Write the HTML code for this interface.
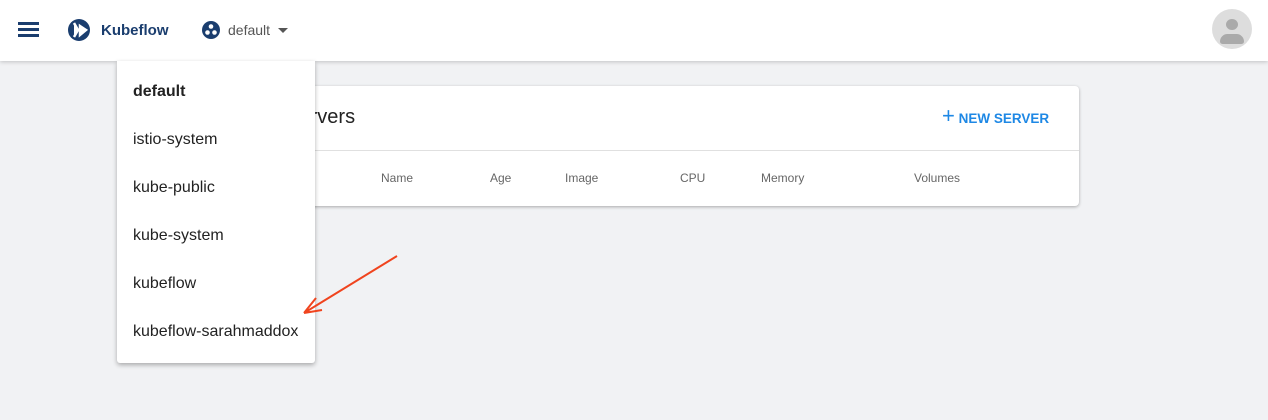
<!DOCTYPE html>
<html><head><style>
body{margin:0;width:1268px;height:420px;background:#f1f2f4;font-family:"Liberation Sans",sans-serif;position:relative;overflow:hidden}
.top{position:absolute;left:0;top:0;width:1268px;height:61px;background:#fff;box-shadow:0 1px 4px rgba(0,0,0,.2)}
.card{position:absolute;left:140px;top:86px;width:939px;height:120px;background:#fff;border-radius:4px;box-shadow:0 1px 3px rgba(0,0,0,.3)}
.th{position:absolute;top:171px;font-size:12px;color:#666}
.menu{position:absolute;left:117px;top:61px;width:198px;height:302px;background:#fff;box-shadow:0 2px 5px rgba(0,0,0,.3);border-radius:0 0 3px 3px}
.menu div{position:absolute;left:16px;font-size:16px;color:#222}
</style></head><body>
<div class="top">
<div style="position:absolute;left:18px;top:22px;width:21px;height:3px;background:#1a3d6e;box-shadow:0 6px 0 #1a3d6e,0 12px 0 #1a3d6e"></div>
<svg style="position:absolute;left:67px;top:18px" width="24" height="24" viewBox="0 0 24 24"><circle cx="12" cy="12" r="11" fill="#1a3d6e"/><path d="M7 5 L11 12 L7 19 M13 8 L19 12 L13 17 Z" stroke="#fff" stroke-width="2.5" fill="#fff"/></svg>
<div style="position:absolute;left:101px;top:22px;font-size:15px;font-weight:bold;color:#1a3d6e">Kubeflow</div>
<svg style="position:absolute;left:202px;top:21px" width="18" height="18" viewBox="0 0 18 18"><circle cx="9" cy="9" r="9" fill="#1a3d6e"/><circle cx="9" cy="5.5" r="2.3" fill="#fff"/><circle cx="5.5" cy="11.5" r="2.3" fill="#fff"/><circle cx="12.5" cy="11.5" r="2.3" fill="#fff"/></svg>
<div style="position:absolute;left:228px;top:22px;font-size:14px;color:#555">default</div>
<div style="position:absolute;left:278px;top:28px;border:5px solid transparent;border-top-color:#555;border-bottom:0"></div>
<div style="position:absolute;left:1212px;top:9px;width:40px;height:40px;border-radius:50%;background:#ddd;overflow:hidden"><div style="position:absolute;left:14px;top:10px;width:12px;height:11px;border-radius:50%;background:#aaa"></div><div style="position:absolute;left:8px;top:25px;width:24px;height:10px;border-radius:12px 12px 4px 4px;background:#aaa"></div></div>
</div>
<div class="card">
<div style="position:absolute;left:55px;top:20px;font-size:20px;color:#222">Notebook Servers</div>
<div style="position:absolute;left:802px;top:20px;font-size:13.5px;font-weight:bold;color:#1e88e5;line-height:20px"><span style="font-size:22px;font-weight:normal">+</span> NEW SERVER</div>
<div style="position:absolute;left:0;top:64px;width:939px;height:1px;background:#e0e0e0"></div>
</div>
<div class="th" style="left:381px">Name</div><div class="th" style="left:490px">Age</div><div class="th" style="left:565px">Image</div><div class="th" style="left:680px">CPU</div><div class="th" style="left:761px">Memory</div><div class="th" style="left:914px">Volumes</div>
<div class="menu">
<div style="top:22px;font-weight:bold">default</div>
<div style="top:70px">istio-system</div>
<div style="top:118px">kube-public</div>
<div style="top:166px">kube-system</div>
<div style="top:214px">kubeflow</div>
<div style="top:262px">kubeflow-sarahmaddox</div>
</div>
<svg style="position:absolute;left:0;top:0" width="1268" height="420"><path d="M397 256 L304 313 M304 313 L316 298 M304 313 L322 310" stroke="#f0441e" stroke-width="2" fill="none"/></svg>
</body></html>
